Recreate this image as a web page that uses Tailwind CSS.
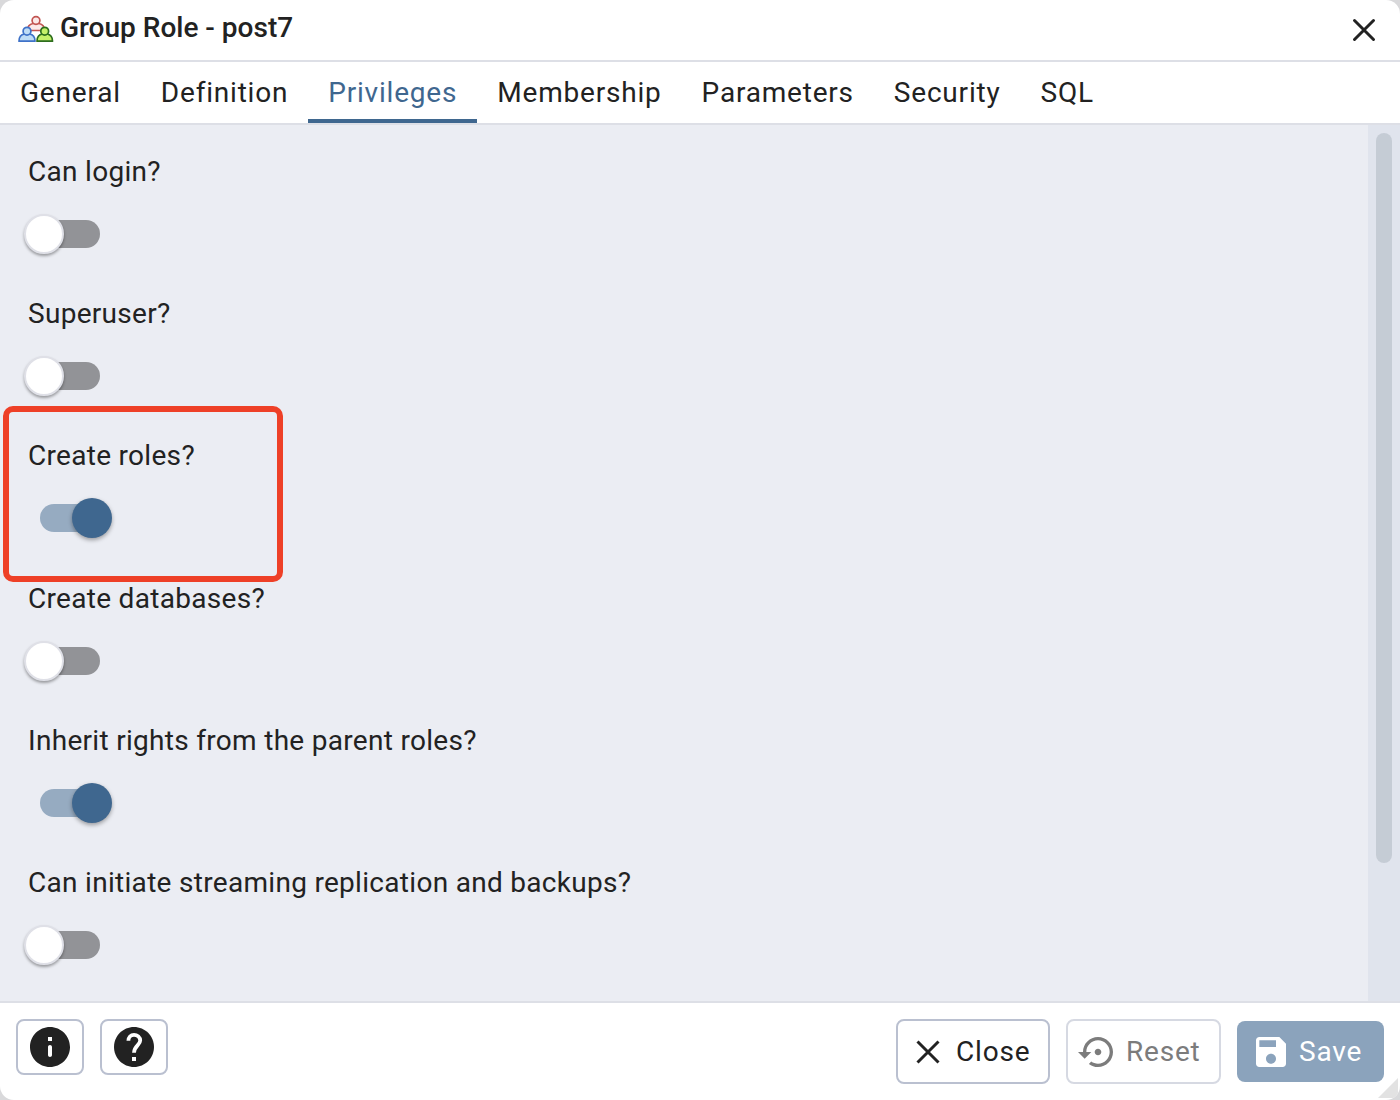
<!DOCTYPE html>
<html lang="en">
<head>
  <meta charset="UTF-8" />
  <meta name="viewport" content="width=device-width, initial-scale=1" />
  <title>Group Role - post7</title>
  <script src="https://cdn.jsdelivr.net/npm/@tailwindcss/browser@4"></script>
</head>
<body class="bg-[#d9d9db] font-['Roboto',sans-serif] text-[#222222]">
  <div class="relative flex h-[1100px] w-[1400px] flex-col overflow-hidden rounded-[14px] bg-white">

    <!-- Title bar -->
    <header class="flex h-[62px] shrink-0 items-center border-b-2 border-[#dddfe6] pl-[18px] pr-[26px]">
      <svg class="mt-[-2px] h-7 w-9" viewBox="0 0 36 28" stroke-width="1.7" stroke-linejoin="round">
        <g fill="#fbe9e9" stroke="#c25552">
          <path d="M9.5 15.5c0-4 2.5-6.500 5.500-7h6c3 .5 5.500 3 5.500 7z" />
          <circle cx="18" cy="5.500" r="3.900" />
        </g>
        <g fill="#bfdcf5" stroke="#3f72c8">
          <path d="M1 26.200c0-4 2.200-6.700 5.500-7.200h5c3.300.5 5.500 3.200 5.500 7.200z" />
          <circle cx="9" cy="16.200" r="3.900" />
        </g>
        <g fill="#c5f06a" stroke="#2d6e1e">
          <path d="M19 26.200c0-4 2.200-6.700 5.500-7.200h4.500c3.300.5 5.500 3.200 5.500 7.200z" />
          <circle cx="26.700" cy="16.200" r="3.900" />
        </g>
      </svg>
      <h1 class="mt-[-4px] ml-1.5 text-[28px] font-medium">Group Role - post7</h1>
      <button class="ml-auto" aria-label="Close dialog">
        <svg class="h-5 w-5 overflow-visible" viewBox="0 0 20 20" stroke="#222222" stroke-width="3" stroke-linecap="round">
          <path d="M.5.5l19 19M19.500.5l-19 19" />
        </svg>
      </button>
    </header>

    <!-- Tabs -->
    <nav class="flex h-[63px] shrink-0 border-b-2 border-[#dddfe6] text-[28px] leading-[61px] tracking-[0.8px]">
      <a class="px-5">General</a>
      <a class="px-5">Definition</a>
      <a class="border-b-4 border-[#3f678f] px-5 text-[#3f678f]">Privileges</a>
      <a class="px-5">Membership</a>
      <a class="px-5">Parameters</a>
      <a class="px-5">Security</a>
      <a class="px-5">SQL</a>
    </nav>

    <!-- Privileges -->
    <main class="flex h-[876px] shrink-0 bg-[#ebedf3]">
      <div id="fields" class="grow overflow-hidden pt-[22px] pl-7"></div>
      <div class="w-8 bg-[#e0e4ed] px-2 pt-2">
        <div class="h-[730px] rounded-full bg-[#c5ccd5]"></div>
      </div>
    </main>

    <!-- Footer -->
    <footer class="flex grow items-start border-t-2 border-[#dddfe6] px-4 pt-4 text-[28px] tracking-[0.8px]">
      <button class="flex h-14 w-[68px] items-center justify-center rounded-lg border-2 border-[#bac0d0]" aria-label="Info">
        <svg class="h-12 w-12" viewBox="0 0 24 24" fill="#222222">
          <path d="M12 2C6.480 2 2 6.480 2 12s4.480 10 10 10 10-4.480 10-10S17.520 2 12 2zm0 15c-.55 0-1-.45-1-1v-4c0-.55.45-1 1-1s1 .45 1 1v4c0 .55-.45 1-1 1zm1-8h-2V7h2v2z" />
        </svg>
      </button>
      <button class="ml-4 flex h-14 w-[68px] items-center justify-center rounded-lg border-2 border-[#bac0d0]" aria-label="Help">
        <svg class="h-12 w-12" viewBox="0 0 24 24" fill="#222222">
          <path d="M12 2C6.480 2 2 6.480 2 12s4.480 10 10 10 10-4.480 10-10S17.520 2 12 2z" />
          <path d="M9.200 8.900C9.200 7.200 10.400 5.900 12 5.900s3.100 1.200 3.100 2.900c0 2.300-3.100 2.700-3.100 6.100" fill="none" stroke="#fff" stroke-width="1.900" />
          <path d="M11 17h2v2h-2z" fill="#fff" />
        </svg>
      </button>

      <button class="ml-auto flex h-[65px] w-[154px] items-center rounded-lg border-2 border-[#bac0d0] pl-[18px]">
        <svg class="h-6 w-6" viewBox="0 0 24 24" stroke="#222222" stroke-width="3">
          <path d="M1.500 1.500l21 21M22.500 1.500l-21 21" />
        </svg>
        <span class="ml-4">Close</span>
      </button>
      <button class="ml-4 flex h-[65px] w-[155px] items-center rounded-lg border-2 border-[#d6d9e2] pl-2.5 text-[#7c7c7c]">
        <svg class="h-10 w-10" viewBox="0 0 24 24" fill="currentColor">
          <path d="M14 12c0-1.100-.9-2-2-2s-2 .9-2 2 .9 2 2 2 2-.9 2-2zm-2-9c-4.970 0-9 4.030-9 9H0l4 4 4-4H5c0-3.870 3.130-7 7-7s7 3.130 7 7-3.130 7-7 7c-1.510 0-2.910-.49-4.060-1.300l-1.420 1.440C8.040 20.300 9.940 21 12 21c4.970 0 9-4.030 9-9s-4.030-9-9-9z" />
        </svg>
        <span class="ml-2">Reset</span>
      </button>
      <button class="mt-0.5 ml-4 flex h-[61px] w-[147px] items-center rounded-lg bg-[#8ba3bc] pl-3.5 text-white">
        <svg class="h-10 w-10" viewBox="0 0 24 24" fill="currentColor">
          <path d="M17 3H5c-1.110 0-2 .9-2 2v14c0 1.100.89 2 2 2h14c1.100 0 2-.9 2-2V7l-4-4zm-5 16c-1.660 0-3-1.340-3-3s1.340-3 3-3 3 1.340 3 3-1.340 3-3 3zm3-10H5V5h10v4z" />
        </svg>
        <span class="ml-2">Save</span>
      </button>
    </footer>

    <!-- Resize grip -->
    <svg class="absolute right-0 bottom-0 h-[22px] w-[22px]" viewBox="0 0 22 22" fill="#e2e2e2">
      <path d="M0 20L20 0v20z" />
    </svg>

    <!-- Highlight around "Create roles?" -->
    <div class="absolute top-[406px] left-[3px] h-[176px] w-[280px] rounded-[10px] border-6 border-[#ee4027]"></div>
  </div>

  <script>
    const fields = [
      { label: "Can login?", on: false },
      { label: "Superuser?", on: false },
      { label: "Create roles?", on: true },
      { label: "Create databases?", on: false },
      { label: "Inherit rights from the parent roles?", on: true },
      { label: "Can initiate streaming replication and backups?", on: false },
    ];

    const offSwitch = `
      <div class="mt-[17px] -ml-1 flex h-10 w-[76px] items-center rounded-full">
        <div class="h-10 w-10 shrink-0 z-10 rounded-full border-2 border-[#dfe0e7] bg-white shadow-[0_2px_3px_rgba(0,0,0,0.35)]"></div>
        <div class="-ml-6 h-7 w-[60px] rounded-r-full bg-[#929397]"></div>
      </div>`;

    const onSwitch = `
      <div class="mt-[17px] ml-3 flex h-10 w-[72px] items-center">
        <div class="-mr-6 h-7 w-14 rounded-l-full bg-[#96abc1]"></div>
        <div class="h-10 w-10 shrink-0 z-10 rounded-full bg-[#3f678f] shadow-[0_2px_4px_rgba(0,0,0,0.35)]"></div>
      </div>`;

    document.getElementById("fields").innerHTML = fields.map(f => `
      <div class="h-[142.2px]">
        <div class="h-[50px] text-[28px] leading-[50px] tracking-[0.3px]">${f.label}</div>
        ${f.on ? onSwitch : offSwitch}
      </div>`).join("");
  </script>
</body>
</html>
